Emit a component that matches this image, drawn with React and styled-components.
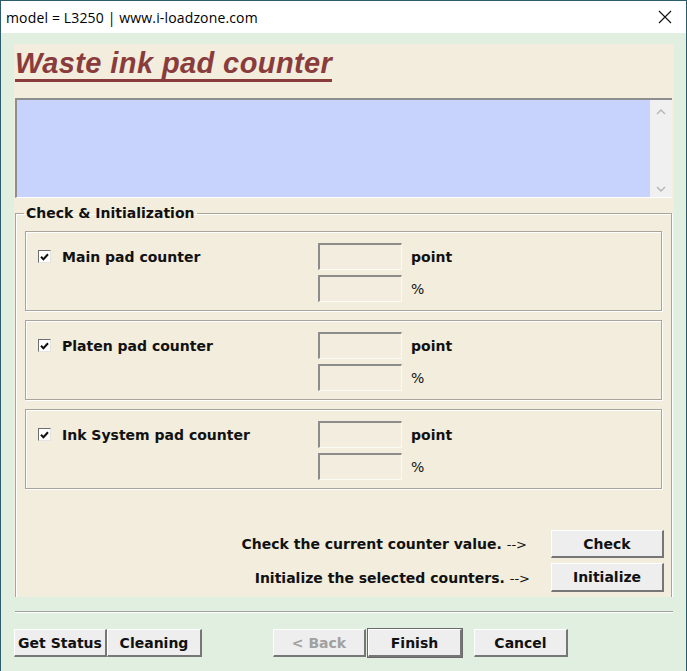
import React from 'react'
import styled, { createGlobalStyle } from 'styled-components'

const GlobalStyle = createGlobalStyle`
  html, body { margin: 0; padding: 0; background: #ffffff; }
  * { box-sizing: border-box; }
`

const Window = styled.div`
  width: 687px;
  height: 671px;
  border: 1px solid #2b5b6c;
  border-bottom: none;
  background: #e1efe1;
  overflow: hidden;
  font-family: "DejaVu Sans", Verdana, sans-serif;
`

const TitleBar = styled.div`
  height: 32px;
  background: #ffffff;
  display: flex;
  align-items: center;
  justify-content: space-between;
  padding: 0 14px 0 5px;
  font-family: "Open Sans", "Noto Sans", sans-serif;
  font-size: 14px;
  letter-spacing: 0.15px;
  color: #000;
`

const CloseIcon = () => (
  <svg width="14" height="14" viewBox="0 0 14 14">
    <path d="M1 1 L13 13 M13 1 L1 13" stroke="#111" strokeWidth="1.1" fill="none" />
  </svg>
)

const Body = styled.div`
  padding: 11px 12px 0 13px;
`

const Panel = styled.div`
  height: 553px;
  background: #f2eddc;
  padding: 3px 2px 0 1px;
  overflow: hidden;
`

const Heading = styled.h1`
  display: inline-block;
  margin: 0;
  font-family: "Liberation Sans", Arial, sans-serif;
  font-style: italic;
  font-weight: bold;
  font-size: 29px;
  letter-spacing: 0.4px;
  line-height: 32px;
  color: #8a3c3c;
  border-bottom: 3px solid #8a3c3c;
`

const LogBox = styled.div`
  margin-top: 16px;
  height: 100px;
  display: flex;
  background: #c7d3fc;
  border-top: 2px solid #8e8e8e;
  border-left: 2px solid #8e8e8e;
  border-bottom: 1px solid #ffffff;
`

const LogText = styled.div`
  flex: 1;
`

const ScrollBar = styled.div`
  width: 22px;
  background: #f0f0f0;
  display: flex;
  flex-direction: column;
  justify-content: space-between;
  align-items: center;
  padding: 8px 0 4px;
`

const Chevron = ({ down }) => (
  <svg width="10" height="7" viewBox="0 0 10 7">
    <path d={down ? 'M1 1 L5 5 L9 1' : 'M1 6 L5 2 L9 6'} stroke="#b4b4b4" strokeWidth="1.4" fill="none" />
  </svg>
)

const Group = styled.fieldset`
  margin: 7px 0 0 0;
  min-height: 420px;
  padding: 9px 9px 0 9px;
  border: 1px solid #a8a69c;
  box-shadow: inset 1px 1px 0 #ffffff, 1px 1px 0 #ffffff;
`

const Legend = styled.legend`
  margin-left: -1px;
  padding: 0 2px;
  font-size: 14px;
  font-weight: bold;
  color: #111;
  line-height: 17px;
`

const Cards = styled.div`
  display: flex;
  flex-direction: column;
  gap: 9px;
`

const Card = styled.div`
  height: 80px;
  border: 1px solid #a8a69c;
  box-shadow: inset 1px 1px 0 #ffffff, 1px 1px 0 #ffffff;
  padding: 11px 0 0 12px;
  display: grid;
  grid-template-columns: 271px 84px auto;
  grid-template-rows: 27px 27px;
  column-gap: 9px;
  row-gap: 5px;
  align-items: center;
`

const CheckLabel = styled.label`
  display: flex;
  align-items: center;
  gap: 11px;
  font-size: 14px;
  font-weight: bold;
  color: #111;
`

const CheckBox = styled.span`
  width: 13px;
  height: 13px;
  background: #ffffff;
  border-top: 1px solid #6d6d6d;
  border-left: 1px solid #6d6d6d;
  border-right: 1px solid #e4e4e4;
  border-bottom: 1px solid #e4e4e4;
  display: flex;
  align-items: center;
  justify-content: center;
`

const CheckMark = () => (
  <svg width="9" height="8" viewBox="0 0 9 8">
    <path d="M1 3.8 L3.4 6.2 L8 1.2" stroke="#111" strokeWidth="2" fill="none" />
  </svg>
)

const Field = styled.div`
  height: 27px;
  background: #f2eddf;
  border-top: 2px solid #8c8c8c;
  border-left: 2px solid #8c8c8c;
  border-right: 1px solid #fbfbf6;
  border-bottom: 1px solid #fbfbf6;
`

const Unit = styled.span`
  font-size: 14px;
  font-weight: ${p => (p.$light ? 'normal' : 'bold')};
  color: #111;
`

const Actions = styled.div`
  margin-top: 41px;
  display: flex;
  flex-direction: column;
  gap: 5px;
  margin-right: -2px;
`

const ActionRow = styled.div`
  display: flex;
  align-items: center;
  justify-content: flex-end;
  gap: ${p => p.$gap}px;
`

const ActionText = styled.span`
  font-size: 14px;
  font-weight: bold;
  color: #111;
  span {
    font-weight: normal;
    font-size: 13px;
  }
`

const Button = styled.button`
  width: ${p => p.$w}px;
  height: ${p => p.$h || 28}px;
  padding: 0;
  background: #eeeeee;
  font-family: "DejaVu Sans", Verdana, sans-serif;
  font-size: 14px;
  font-weight: bold;
  color: ${p => (p.disabled ? '#a0a0a0' : '#111')};
  border-top: 1px solid #ffffff;
  border-left: 1px solid #ffffff;
  border-right: 2px solid #767676;
  border-bottom: 2px solid #767676;
  box-shadow: ${p => (p.$default ? '0 0 0 1px #6a6a6a' : 'none')};
  cursor: default;
`

const Separator = styled.div`
  margin: 14px 1px 0 1px;
  height: 2px;
  border-top: 1px solid #a0a0a0;
  border-bottom: 1px solid #ffffff;
`

const ButtonBar = styled.div`
  display: flex;
  align-items: center;
  margin-top: 16px;
`

const Spacer = styled.div`
  width: ${p => p.$w}px;
`

const counters = ['Main pad counter', 'Platen pad counter', 'Ink System pad counter']

export default function App() {
  return (
    <>
      <GlobalStyle />
      <Window>
        <TitleBar>
          <span>model = L3250 | www.i-loadzone.com</span>
          <CloseIcon />
        </TitleBar>
        <Body>
          <Panel>
            <Heading>Waste ink pad counter</Heading>
            <LogBox>
              <LogText />
              <ScrollBar>
                <Chevron />
                <Chevron down />
              </ScrollBar>
            </LogBox>
            <Group>
              <Legend>Check &amp; Initialization</Legend>
              <Cards>
                {counters.map(name => (
                  <Card key={name}>
                    <CheckLabel>
                      <CheckBox>
                        <CheckMark />
                      </CheckBox>
                      {name}
                    </CheckLabel>
                    <Field />
                    <Unit>point</Unit>
                    <span />
                    <Field />
                    <Unit $light>%</Unit>
                  </Card>
                ))}
              </Cards>
              <Actions>
                <ActionRow $gap={24}>
                  <ActionText>
                    Check the current counter value. <span>--&gt;</span>
                  </ActionText>
                  <Button $w={113}>Check</Button>
                </ActionRow>
                <ActionRow $gap={21}>
                  <ActionText>
                    Initialize the selected counters. <span>--&gt;</span>
                  </ActionText>
                  <Button $w={113} $h={29}>Initialize</Button>
                </ActionRow>
              </Actions>
            </Group>
          </Panel>
          <Separator />
          <ButtonBar>
            <Button $w={93}>Get Status</Button>
            <Button $w={95}>Cleaning</Button>
            <Spacer $w={71} />
            <Button $w={93} disabled>&lt; Back</Button>
            <Spacer $w={2} />
            <Button $w={94} $default>Finish</Button>
            <Spacer $w={12} />
            <Button $w={94}>Cancel</Button>
          </ButtonBar>
        </Body>
      </Window>
    </>
  )
}
